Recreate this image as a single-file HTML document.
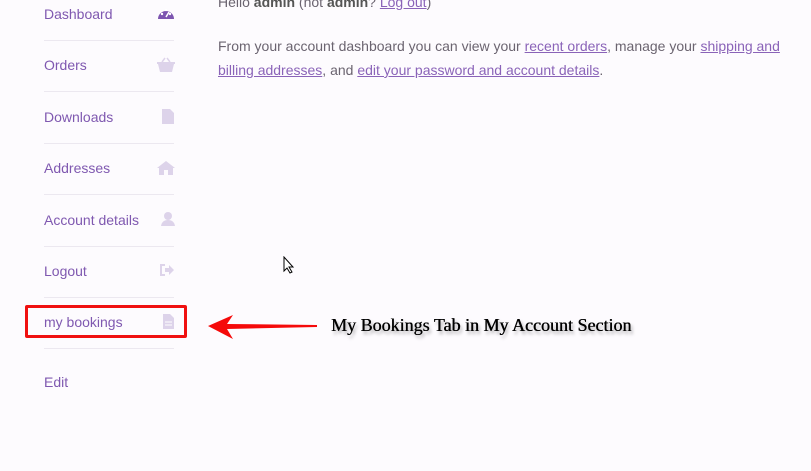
<!DOCTYPE html>
<html><head><meta charset="utf-8"><style>
body{margin:0;width:811px;height:471px;background:#fdfbfe;font-family:"Liberation Sans",sans-serif;position:relative;overflow:hidden}
.i{position:absolute;left:44px;font-size:14px;color:#7f58b0;}
.s{position:absolute;left:44px;width:130px;height:1px;background:#ece8f0}
.ic{position:absolute;left:160px;width:14px;height:14px;overflow:visible}
.p{position:absolute;left:218px;font-size:14px;color:#6b6470;line-height:24px;width:580px}
.p a{color:#8a63b8;text-decoration:underline}
</style></head><body>
<div class="i" style="top:6px">Dashboard</div>
<svg class="ic" style="top:6px;left:157px;width:18px" viewBox="0 0 18 14"><path d="M1 13A8 8 0 1 1 17 13Z" fill="#7d55b0"/><circle cx="5" cy="8" r="1.2" fill="#fff"/><circle cx="9" cy="4" r="1.2" fill="#fff"/><circle cx="13" cy="8" r="1.2" fill="#fff"/><path d="M9 11L12 6" stroke="#fff" stroke-width="1.5"/></svg>
<div class="s" style="top:40px"></div>
<div class="i" style="top:57px">Orders</div>
<svg class="ic" style="top:58px;left:157px;width:18px" viewBox="0 0 18 14"><path d="M0 4h18v2h-1l-2 8H3L1 6H0Z" fill="#ddd3ea"/><path d="M5 4L8 0M13 4L10 0" stroke="#ddd3ea" stroke-width="1.5"/></svg>
<div class="s" style="top:91px"></div>
<div class="i" style="top:109px">Downloads</div>
<svg class="ic" style="top:109px;left:162px;width:12px;height:15px" viewBox="0 0 12 15"><path d="M0 0h8l4 4v11H0Z" fill="#ddd3ea"/></svg>
<div class="s" style="top:143px"></div>
<div class="i" style="top:160px">Addresses</div>
<svg class="ic" style="top:161px;left:157px;width:18px" viewBox="0 0 18 14"><path d="M9 0L18 7h-2v7h-5V9H7v5H2V7H0Z" fill="#ddd3ea"/></svg>
<div class="s" style="top:194px"></div>
<div class="i" style="top:212px">Account details</div>
<svg class="ic" style="top:212px;left:161px" viewBox="0 0 14 14"><circle cx="7" cy="4" r="4" fill="#ddd3ea"/><path d="M0 14Q1 8 7 8Q13 8 14 14Z" fill="#ddd3ea"/></svg>
<div class="s" style="top:246px"></div>
<div class="i" style="top:263px">Logout</div>
<svg class="ic" style="top:263px;left:160px" viewBox="0 0 14 14"><path d="M5 2H1v10h4" stroke="#ddd3ea" stroke-width="2" fill="none"/><path d="M5 5h4V2l5 5-5 5V9H5Z" fill="#ddd3ea"/></svg>
<div class="s" style="top:297px"></div>
<div class="i" style="top:314px">my bookings</div>
<svg class="ic" style="top:314px;left:163px;width:11px;height:15px" viewBox="0 0 11 15"><path d="M0 0h7l4 4v11H0Z" fill="#ddd3ea"/><path d="M2 8h7M2 11h7" stroke="#fff"/></svg>
<div style="position:absolute;left:25px;top:305px;width:156px;height:27px;border:3.5px solid #f01010;border-radius:2px"></div>
<div class="s" style="top:348px"></div>
<div class="i" style="top:374px">Edit</div>
<svg style="position:absolute;left:205px;top:312px" width="115" height="30" viewBox="0 0 115 30"><path d="M3 14L28 3L22 12L112 13L112 15L22 17L28 27Z" fill="#f50a0a"/></svg>
<div style="position:absolute;left:331px;top:315px;font-family:'Liberation Serif',serif;font-size:18px;color:#000;text-shadow:0.4px 0 0 #000,2px 3px 3px rgba(0,0,0,.35);white-space:nowrap">My Bookings Tab in My Account Section</div>
<svg style="position:absolute;left:283px;top:256px" width="12" height="18" viewBox="0 0 12 18"><path d="M1 1v14l3-3 3 5 2-1-3-5h4Z" fill="#fff" stroke="#000"/></svg>
<div class="p" style="top:-10px">Hello <b style="color:#555">admin</b> (not <b style="color:#555">admin</b>? <a>Log out</a>)</div>
<div class="p" style="top:34px">From your account dashboard you can view your <a>recent orders</a>, manage your <a>shipping and billing addresses</a>, and <a>edit your password and account details</a>.</div>
</body></html>
